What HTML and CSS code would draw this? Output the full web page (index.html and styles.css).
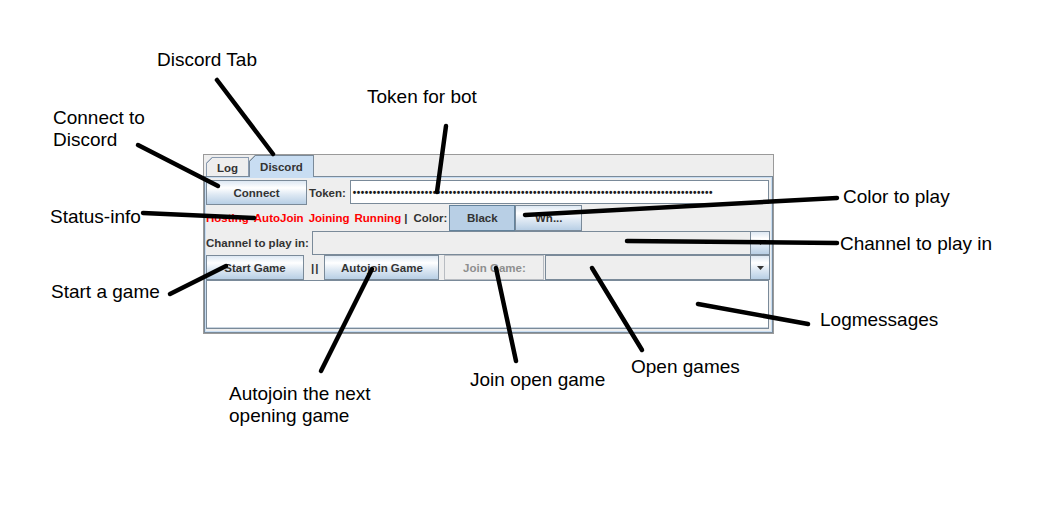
FILE: index.html
```html
<!DOCTYPE html>
<html>
<head>
<meta charset="utf-8">
<title>Discord Tab</title>
<link rel="stylesheet" href="styles.css">
</head>
<body>
<div class="canvas">
  <div class="window">
    <div class="tabs">
      <div class="tab log">Log</div>
      <div class="tab discord">Discord</div>
    </div>
    <div class="content">
      <div class="panel">
        <div class="row r1">
          <div class="btn connect">Connect</div>
          <div class="lbl token-lbl">Token:</div>
          <div class="field token"><span class="dots">••••••••••••••••••••••••••••••••••••••••••••••••••••••••••••••••••••••••••••••••••••••••••</span></div>
        </div>
        <div class="row r2">
          <span class="st">Hosting</span>
          <span class="st">AutoJoin</span>
          <span class="st">Joining</span>
          <span class="st">Running</span>
          <span class="lbl pipe">|</span>
          <span class="lbl color-lbl">Color:</span>
          <div class="btn sel black">Black</div>
          <div class="btn white">Wh...</div>
        </div>
        <div class="row r3">
          <div class="lbl">Channel to play in:</div>
          <div class="combo channel">
            <div class="val"></div>
            <div class="arr"><svg width="7" height="4" viewBox="0 0 7 4"><polygon points="0,0 7,0 3.5,4" fill="#333"/></svg></div>
          </div>
        </div>
        <div class="row r4">
          <div class="btn start">Start Game</div>
          <div class="lbl bars">||</div>
          <div class="btn autojoin">Autojoin Game</div>
          <div class="btn disabled join">Join Game:</div>
          <div class="combo games">
            <div class="val"></div>
            <div class="arr"><svg width="7" height="4" viewBox="0 0 7 4"><polygon points="0,0 7,0 3.5,4" fill="#333"/></svg></div>
          </div>
        </div>
        <div class="row r5">
          <div class="logarea"></div>
        </div>
      </div>
    </div>
  </div>

  <div class="note n-tab">Discord Tab</div>
  <div class="note n-token">Token for bot</div>
  <div class="note n-connect">Connect to<br>Discord</div>
  <div class="note n-color">Color to play</div>
  <div class="note n-channel">Channel to play in</div>
  <div class="note n-log">Logmessages</div>
  <div class="note n-status">Status-info</div>
  <div class="note n-start">Start a game</div>
  <div class="note n-open">Open games</div>
  <div class="note n-join">Join open game</div>
  <div class="note n-auto">Autojoin the next<br>opening game</div>

  <svg class="arrows" width="1046" height="509" viewBox="0 0 1046 509">
    <g stroke="#000" stroke-width="4.5" stroke-linecap="round" fill="none">
      <line x1="217" y1="80" x2="273" y2="154"/>
      <line x1="446" y1="126" x2="437" y2="192"/>
      <line x1="138" y1="145" x2="218" y2="186"/>
      <line x1="143" y1="213" x2="254" y2="218"/>
      <line x1="525" y1="215" x2="837" y2="198"/>
      <line x1="627" y1="241" x2="837" y2="243"/>
      <line x1="170" y1="294" x2="226" y2="266"/>
      <line x1="321" y1="371" x2="372" y2="269"/>
      <line x1="496" y1="268" x2="516" y2="361"/>
      <line x1="592" y1="268" x2="642" y2="350"/>
      <line x1="698" y1="304" x2="808" y2="324"/>
    </g>
  </svg>
</div>
</body>
</html>
```

FILE: styles.css
```css
* { box-sizing: border-box; }

body {
  margin: 0;
  background: #ffffff;
}

.canvas {
  position: relative;
  width: 1046px;
  height: 509px;
  padding: 154px 0 0 203px;
  overflow: hidden;
  font-family: "Liberation Sans", Arial, sans-serif;
}

/* ---------- Java window ---------- */
.window {
  width: 571px;
  height: 180px;
  border: 1px solid #9a9a9a;
  background: #eeeeee;
  display: flex;
  flex-direction: column;
  font: bold 11.5px "Liberation Sans", Arial, sans-serif;
  color: #333333;
}

.tabs {
  flex: none;
  height: 21px;
  display: flex;
  align-items: flex-end;
  padding-left: 2px;
}

.tab {
  display: flex;
  align-items: center;
  justify-content: center;
  border: 1px solid #8a9bb0;
  border-bottom: none;
  clip-path: polygon(6px 0, 100% 0, 100% 100%, 0 100%, 0 6px);
  background-origin: border-box;
  padding-top: 1px;
}

.tab.log {
  width: 43px;
  height: 19px;
  background-image: linear-gradient(135deg, #8a9bb0 0 4.95px, #eeeeee 4.95px);
}

.tab.discord {
  position: relative;
  z-index: 1;
  width: 65px;
  height: 22px;
  margin-bottom: -1px;
  border-color: #7a8a99;
  background-image: linear-gradient(135deg, #7a8a99 0 4.95px, #c8ddf2 4.95px);
}

.content {
  flex: 1;
  border: 1px solid #7a8a99;
  padding: 1px;
  box-shadow: inset 0 0 0 1px #c8ddf2;
}

.panel {
  height: 100%;
  padding: 2px 1px 2px 0;
  display: grid;
  grid-template-rows: 25px 26px 24px 25px 49px;
}

.row {
  display: flex;
  align-items: stretch;
}

.lbl {
  display: flex;
  align-items: center;
  white-space: nowrap;
}

.btn {
  display: flex;
  align-items: center;
  justify-content: center;
  white-space: nowrap;
  border: 1px solid #7a8a99;
  background: linear-gradient(#dde8f3 0%, #ffffff 30%, #dde8f3 60%, #b8cfe5 100%);
  color: #333333;
}

.btn.sel {
  background: #b8cfe5;
  border-color: #63829b;
}

.btn.disabled {
  background: #eeeeee;
  border-color: #b8bcc2;
  color: #8e8f8f;
}

/* row 1 */
.btn.connect { width: 101px; }
.token-lbl { margin-left: 2px; }
.field.token {
  flex: 1;
  height: 24px;
  margin-left: 4px;
  margin-right: 1px;
  border: 1px solid #7a8a99;
  background: #ffffff;
  display: flex;
  align-items: center;
  padding-left: 2px;
  overflow: hidden;
}
.dots {
  font: bold 10px "Liberation Sans", Arial, sans-serif;
  letter-spacing: 0.5px;
  color: #1a1a1a;
  white-space: nowrap;
}

/* row 2 */
.r2 { align-items: center; }
.st {
  color: #ff0000;
  margin-right: 5px;
}
.pipe { margin-left: -2px; }
.color-lbl { margin-left: 6px; }
.r2 .btn { align-self: stretch; }
.btn.black { width: 66px; margin-left: 2px; }
.btn.white { width: 67px; margin-left: 0; }

/* row 3 */
.combo {
  display: flex;
  border: 1px solid #7a8a99;
  background: #eeeeee;
}
.combo .val { flex: 1; }
.combo .arr {
  width: 19px;
  border-left: 1px solid #7a8a99;
  background: linear-gradient(#dde8f3 0%, #ffffff 30%, #dde8f3 60%, #b8cfe5 100%);
  display: flex;
  align-items: center;
  justify-content: center;
}
.combo .arr svg { display: block; }
.combo.channel { flex: 1; margin-left: 3px; }

/* row 4 */
.btn.start { width: 98px; }
.bars { margin-left: 7px; letter-spacing: 1px; }
.btn.autojoin { width: 115px; margin-left: 5px; }
.btn.join { width: 100px; margin-left: 5px; }
.combo.games { flex: 1; margin-left: 1px; }

/* row 5 */
.logarea {
  flex: 1;
  margin-right: 1px;
  border: 1px solid #7a8a99;
  box-shadow: inset 0 -1px 0 #c8d4e0;
  background: #ffffff;
}

/* ---------- annotations ---------- */
.note {
  position: absolute;
  font: 19px/22px "Liberation Sans", Arial, sans-serif;
  color: #000000;
  white-space: nowrap;
}
.n-tab { left: 157px; top: 49px; }
.n-token { left: 367px; top: 86px; }
.n-connect { left: 53px; top: 107px; }
.n-color { left: 843px; top: 186px; }
.n-channel { left: 840px; top: 233px; }
.n-log { left: 820px; top: 309px; }
.n-status { left: 50px; top: 206px; }
.n-start { left: 51px; top: 281px; }
.n-open { left: 631px; top: 356px; }
.n-join { left: 470px; top: 369px; }
.n-auto { left: 229px; top: 383px; }

.arrows {
  position: absolute;
  left: 0;
  top: 0;
  z-index: 2;
  pointer-events: none;
}
```
